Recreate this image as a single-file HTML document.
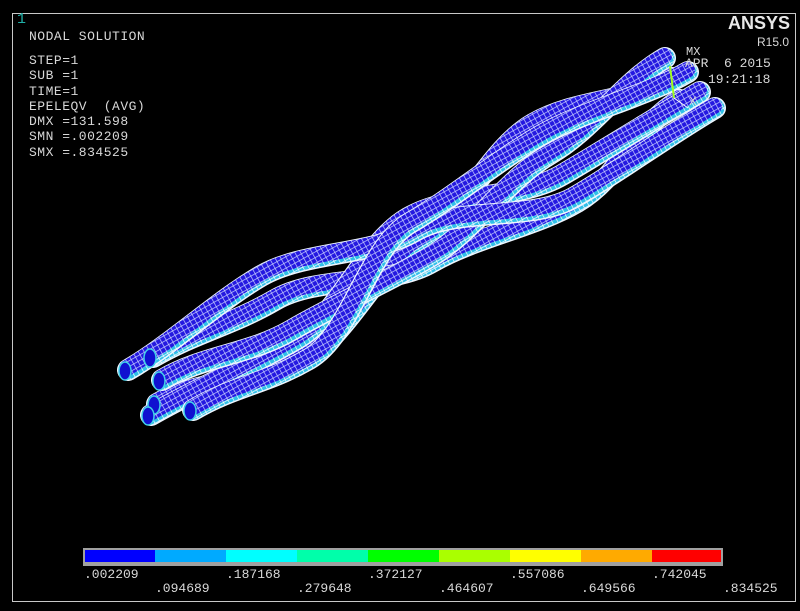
<!DOCTYPE html>
<html><head><style>
html,body{margin:0;padding:0;background:#000;width:800px;height:611px;overflow:hidden;position:relative}
.t{position:absolute;font-family:"Liberation Mono",monospace;color:#d8d8d8;font-size:13px;line-height:15.3px;white-space:pre}
.frame{position:absolute;left:12px;top:13px;width:782px;height:587px;border:1px solid #c8c8c8}
.bar{position:absolute;left:83px;top:548px;width:640px;height:18px;background:#a0a0a0}
.seg{position:absolute;top:2px;height:12px;width:71px}
.lb{position:absolute;font-family:"Liberation Mono",monospace;color:#d8d8d8;font-size:13px;line-height:13px}
</style></head><body>
<div class="frame"></div>
<div class="t" style="left:17px;top:12px;color:#20b0a8;font-size:15px">1</div>
<div class="t" style="left:29px;top:29px;letter-spacing:0.5px">NODAL SOLUTION</div>
<div class="t" style="left:29px;top:53px;letter-spacing:0.5px">STEP=1
SUB =1
TIME=1
EPELEQV  (AVG)
DMX =131.598
SMN =.002209
SMX =.834525</div>
<div style="position:absolute;left:728px;top:13px;font-family:'Liberation Sans',sans-serif;font-weight:bold;font-size:18px;color:#e8e8e8">ANSYS</div>
<div style="position:absolute;left:757px;top:35px;font-family:'Liberation Sans',sans-serif;font-size:12px;color:#d8d8d8">R15.0</div>
<svg width="800" height="611" style="position:absolute;left:0;top:0">
<defs>
<pattern id="m" width="5" height="5" patternUnits="userSpaceOnUse" patternTransform="rotate(-29)">
<rect width="5" height="5" fill="#c8d0ff"/>
<rect x="0.7" y="0.7" width="4.3" height="4.3" fill="#2418e0"/>
</pattern>
<pattern id="c" width="5" height="5" patternUnits="userSpaceOnUse" patternTransform="rotate(-29)">
<rect width="5" height="5" fill="#ffffff"/>
<rect x="0.7" y="0.7" width="4.3" height="4.3" fill="#30c0e8"/>
</pattern>
<path id="p1" d="M128,370 C171,345 218,301 261,276 S372,256 415,231 S532,222 575,197 S672,133 715,108"/>
<path id="p2" d="M153,357 C196,332 232,325 275,300 S389,287 432,262 S534,227 577,202 S637,125 680,100"/>
<path id="p3" d="M162,380 C205,355 249,355 292,330 S387,282 430,257 S507,179 550,154 S622,83 665,58"/>
<path id="p4" d="M157,404 C200,379 264,382 307,357 S377,265 420,240 S490,149 533,124 S629,103 672,78"/>
<path id="p5" d="M193,410 C236,385 266,384 309,359 S367,248 410,223 S497,161 540,136 S645,97 688,72"/>
<path id="p6" d="M151,415 C194,390 254,364 297,339 S365,243 408,218 S519,200 562,175 S657,117 700,92"/>
</defs>
<g fill="none" stroke-linecap="round">
<g><use href="#p4" stroke="#eef6ff" stroke-width="22"/><use href="#p4" stroke="url(#c)" stroke-width="19"/><use href="#p4" stroke="url(#m)" stroke-width="16" transform="translate(-1,-2)"/></g>
<g><use href="#p2" stroke="#eef6ff" stroke-width="22"/><use href="#p2" stroke="url(#c)" stroke-width="19"/><use href="#p2" stroke="url(#m)" stroke-width="16" transform="translate(-1,-2)"/></g>
<g><use href="#p6" stroke="#eef6ff" stroke-width="22"/><use href="#p6" stroke="url(#c)" stroke-width="19"/><use href="#p6" stroke="url(#m)" stroke-width="16" transform="translate(-1,-2)"/></g>
<g><use href="#p3" stroke="#eef6ff" stroke-width="22"/><use href="#p3" stroke="url(#c)" stroke-width="19"/><use href="#p3" stroke="url(#m)" stroke-width="16" transform="translate(-1,-2)"/></g>
<g><use href="#p1" stroke="#eef6ff" stroke-width="22"/><use href="#p1" stroke="url(#c)" stroke-width="19"/><use href="#p1" stroke="url(#m)" stroke-width="16" transform="translate(-1,-2)"/></g>
<g><use href="#p5" stroke="#eef6ff" stroke-width="22"/><use href="#p5" stroke="url(#c)" stroke-width="19"/><use href="#p5" stroke="url(#m)" stroke-width="16" transform="translate(-1,-2)"/></g>
</g>
<g fill="#1010d0" stroke="#40d0e8" stroke-width="1.5">
<ellipse cx="125" cy="371" rx="6" ry="9"/>
<ellipse cx="150" cy="358" rx="6" ry="9"/>
<ellipse cx="159" cy="381" rx="6" ry="9"/>
<ellipse cx="154" cy="405" rx="6" ry="9"/>
<ellipse cx="190" cy="411" rx="6" ry="9"/>
<ellipse cx="148" cy="416" rx="6" ry="9"/>
</g>
<line x1="670" y1="66" x2="674" y2="98" stroke="#a0ff20" stroke-width="2"/>
<line x1="674" y1="98" x2="688" y2="108" stroke="#ffffff" stroke-width="1"/>
<text x="686" y="55" font-family="Liberation Mono,monospace" font-size="12" fill="#d8d8d8">MX</text>
<text x="689" y="105" font-family="Liberation Mono,monospace" font-size="13" fill="#d8d8d8">X</text>
<text x="685" y="67" font-family="Liberation Mono,monospace" font-size="13" fill="#d8d8d8" xml:space="preserve">APR  6 2015</text>
<text x="708" y="83" font-family="Liberation Mono,monospace" font-size="13" fill="#d8d8d8">19:21:18</text>
</svg>
<div class="bar">
<div class="seg" style="left:2px;background:#0000ff"></div>
<div class="seg" style="left:72px;background:#00aaff"></div>
<div class="seg" style="left:143px;background:#00ffff"></div>
<div class="seg" style="left:214px;background:#00ffaa"></div>
<div class="seg" style="left:285px;background:#00ff00"></div>
<div class="seg" style="left:356px;background:#aaff00"></div>
<div class="seg" style="left:427px;background:#ffff00"></div>
<div class="seg" style="left:498px;background:#ffaa00"></div>
<div class="seg" style="left:569px;background:#ff0000;width:69px"></div>
</div>
<div class="lb" style="left:84px;top:568px">.002209</div>
<div class="lb" style="left:155px;top:582px">.094689</div>
<div class="lb" style="left:226px;top:568px">.187168</div>
<div class="lb" style="left:297px;top:582px">.279648</div>
<div class="lb" style="left:368px;top:568px">.372127</div>
<div class="lb" style="left:439px;top:582px">.464607</div>
<div class="lb" style="left:510px;top:568px">.557086</div>
<div class="lb" style="left:581px;top:582px">.649566</div>
<div class="lb" style="left:652px;top:568px">.742045</div>
<div class="lb" style="left:723px;top:582px">.834525</div>
</body></html>
